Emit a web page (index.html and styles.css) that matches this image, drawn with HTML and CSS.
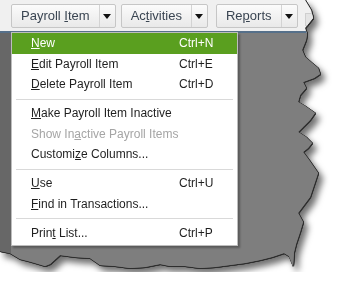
FILE: index.html
```html
<!doctype html>
<html>
<head>
    <meta charset="utf-8">
    <title>Payroll Item menu</title>
    <link rel="stylesheet" href="styles.css">
</head>
<body>
<div class="paper">
    <div class="sheet">
        <div class="toolbar">
            <div class="tb-btn"><span class="tb-label">Payroll <u>I</u>tem</span><span class="tb-arrow"></span></div>
            <div class="tb-btn"><span class="tb-label">Ac<u>t</u>ivities</span><span class="tb-arrow"></span></div>
            <div class="tb-btn tb-reports"><span class="tb-label">Re<u>p</u>orts</span><span class="tb-arrow"></span></div>
            <div class="tb-stub"></div>
        </div>

        <div class="workarea">
            <ul class="menu">
                <li class="menu-item active"><span><u>N</u>ew</span><span>Ctrl+N</span></li>
                <li class="menu-item"><span><u>E</u>dit Payroll Item</span><span>Ctrl+E</span></li>
                <li class="menu-item"><span><u>D</u>elete Payroll Item</span><span>Ctrl+D</span></li>
                <li class="menu-sep"></li>
                <li class="menu-item"><span><u>M</u>ake Payroll Item Inactive</span></li>
                <li class="menu-item disabled"><span>Show In<u>a</u>ctive Payroll Items</span></li>
                <li class="menu-item"><span>Customi<u>z</u>e Columns...</span></li>
                <li class="menu-sep"></li>
                <li class="menu-item"><span><u>U</u>se</span><span>Ctrl+U</span></li>
                <li class="menu-item"><span><u>F</u>ind in Transactions...</span></li>
                <li class="menu-sep"></li>
                <li class="menu-item"><span>Prin<u>t</u> List...</span><span>Ctrl+P</span></li>
            </ul>
        </div>
    </div>
</div>
</body>
</html>
```

FILE: styles.css
```css
body {
    margin: 0;
    background: #FFFFFF;
    font-family: "Liberation Sans", Arial, sans-serif;
}

/* torn screenshot edge: outline on right/bottom, then a soft shadow */
.paper {
    width: 325px;
    height: 272px;
    filter: drop-shadow(1px 0 0 #2e2e2e) drop-shadow(0 1px 0 #2e2e2e) drop-shadow(4px 5px 3px rgba(0, 0, 0, 0.55));
}

.sheet {
    height: 100%;
    display: flex;
    flex-direction: column;
    background: #7e7e7e;
    clip-path: polygon(0 0, 305px 0, 308px 5px, 311px 10px, 313px 18px, 309px 23px, 305px 28px, 307px 34px,
        306px 40px, 302px 50px, 305px 57px, 312px 63px, 318px 68px, 320px 74px, 314px 78px, 303px 82px,
        306px 88px, 300px 95px, 298px 102px, 305px 106px, 315px 113px, 310px 120px, 304px 126px, 298px 132px,
        306px 137px, 312px 143px, 308px 148px, 303px 152px, 309px 160px, 318px 173px, 314px 185px, 310px 197px,
        304px 205px, 298px 213px, 303px 222px, 300px 232px, 296px 244px, 294px 252px, 293px 266px, 289px 256px,
        284px 253px, 272px 257px, 260px 260px, 245px 263px, 230px 265px, 215px 267px, 200px 268px, 185px 266px,
        170px 266px, 160px 264px, 145px 267px, 130px 268px, 115px 266px, 100px 265px, 90px 258px, 75px 257px,
        60px 255px, 50px 264px, 45px 266px, 35px 263px, 28px 261px, 20px 259px, 10px 253px, 0 251px);
}

.toolbar {
    flex: none;
    height: 33px;
    box-sizing: border-box;
    padding: 4px 0 0 11px;
    display: flex;
    align-items: flex-start;
    gap: 5px;
    background: #f0f0f0;
    border-bottom: 2px solid #56708a;
}

.tb-btn {
    display: flex;
    height: 24px;
    box-sizing: border-box;
    border: 1px solid #c6c6c6;
    border-radius: 2px;
    background: linear-gradient(#fbfbfb, #e9e9e9);
}

.tb-reports {
    margin-left: 3px;
}

.tb-label {
    padding: 0 9px;
    font-size: 13px;
    line-height: 22px;
    color: #3a4552;
}

.tb-arrow {
    width: 15px;
    display: flex;
    align-items: center;
    justify-content: center;
    border-left: 1px solid #d3d3d3;
}

.tb-arrow::before {
    content: "";
    border-left: 4px solid transparent;
    border-right: 4px solid transparent;
    border-top: 5px solid #111;
}

.tb-stub {
    width: 12px;
    height: 11px;
    margin: 9px 0 0 2px;
    background: #e4e4e4;
    border: 1px solid #cfcfcf;
}

.workarea {
    flex: 1;
    padding-left: 11px;
    background: linear-gradient(to right, #676767 11px, #7e7e7e 11px);
}

.menu {
    list-style: none;
    width: 227px;
    box-sizing: border-box;
    margin: -1px 0 0;
    padding: 0 0 2px;
    background: #FFFFFF;
    border: 1px solid #bdbdbd;
    box-shadow: 2px 2px 2px rgba(0, 0, 0, 0.3);
    font-size: 12px;
    color: #1f1f1f;
}

.menu-item {
    display: grid;
    grid-template-columns: 148px auto;
    align-items: center;
    height: 20.5px;
    padding-left: 19px;
}

.menu-item.active {
    background: #5a9f1f;
    color: #FFFFFF;
}

.menu-item.disabled {
    color: #a5a5a5;
}

.menu-sep {
    height: 1px;
    margin: 4px 4px 3.5px;
    background: #d9d9d9;
}
```
